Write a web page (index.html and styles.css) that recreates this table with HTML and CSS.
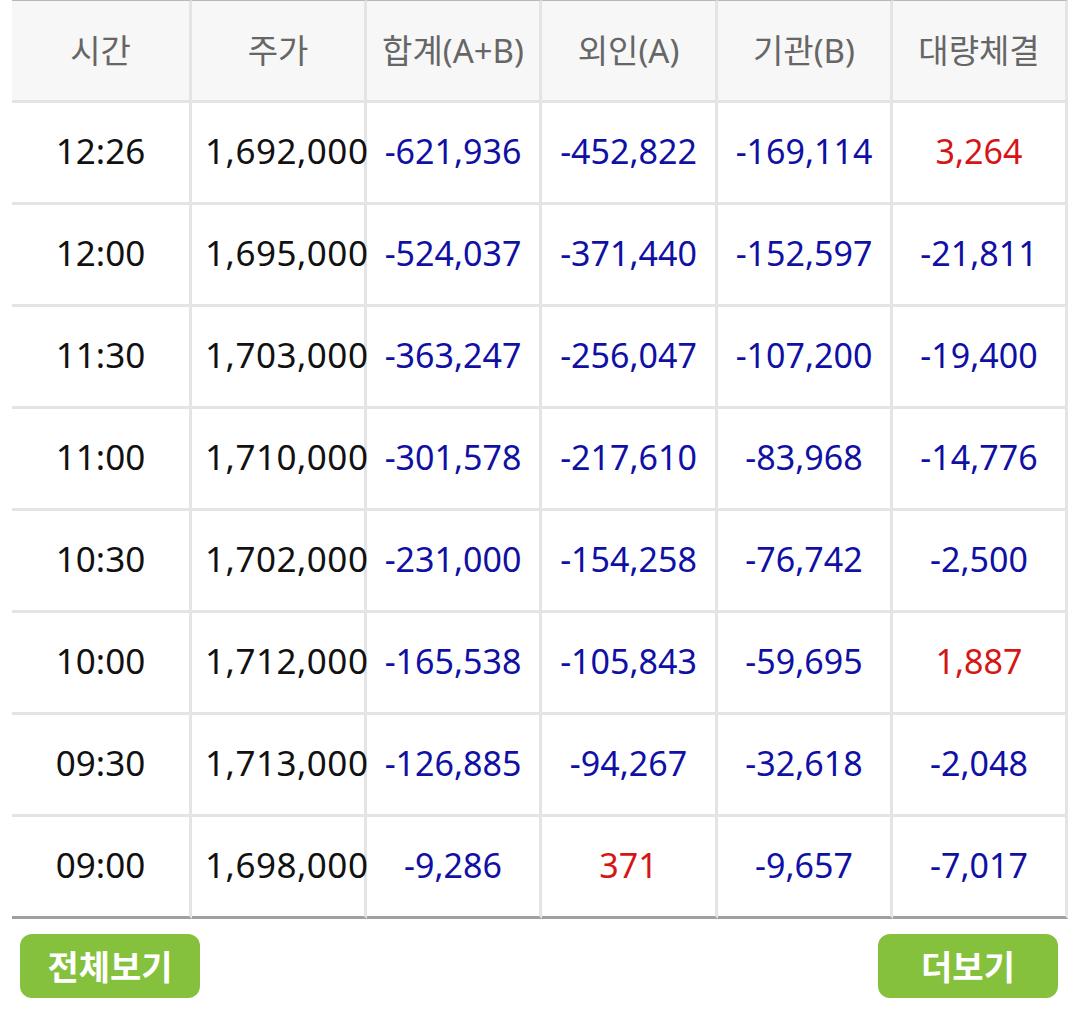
FILE: index.html
```html
<!DOCTYPE html>
<html lang="ko">
<head>
<meta charset="utf-8">
<title>시간대별 투자자 매매</title>
<link rel="stylesheet" href="styles.css">
</head>
<body>
<div class="wrap">
  <table class="trade">
    <thead>
      <tr>
        <th class="c1">시간</th>
        <th class="c2">주가</th>
        <th class="c3">합계(A+B)</th>
        <th class="c4">외인(A)</th>
        <th class="c5">기관(B)</th>
        <th class="c6">대량체결</th>
      </tr>
    </thead>
    <tbody>
      <tr><td>12:26</td><td class="price">1,692,000</td><td class="dn">-621,936</td><td class="dn">-452,822</td><td class="dn">-169,114</td><td class="up">3,264</td></tr>
      <tr><td>12:00</td><td class="price">1,695,000</td><td class="dn">-524,037</td><td class="dn">-371,440</td><td class="dn">-152,597</td><td class="dn">-21,811</td></tr>
      <tr><td>11:30</td><td class="price">1,703,000</td><td class="dn">-363,247</td><td class="dn">-256,047</td><td class="dn">-107,200</td><td class="dn">-19,400</td></tr>
      <tr><td>11:00</td><td class="price">1,710,000</td><td class="dn">-301,578</td><td class="dn">-217,610</td><td class="dn">-83,968</td><td class="dn">-14,776</td></tr>
      <tr><td>10:30</td><td class="price">1,702,000</td><td class="dn">-231,000</td><td class="dn">-154,258</td><td class="dn">-76,742</td><td class="dn">-2,500</td></tr>
      <tr><td>10:00</td><td class="price">1,712,000</td><td class="dn">-165,538</td><td class="dn">-105,843</td><td class="dn">-59,695</td><td class="up">1,887</td></tr>
      <tr><td>09:30</td><td class="price">1,713,000</td><td class="dn">-126,885</td><td class="dn">-94,267</td><td class="dn">-32,618</td><td class="dn">-2,048</td></tr>
      <tr><td>09:00</td><td class="price">1,698,000</td><td class="dn">-9,286</td><td class="up">371</td><td class="dn">-9,657</td><td class="dn">-7,017</td></tr>
    </tbody>
  </table>
  <div class="actions">
    <button class="btn" type="button">전체보기</button>
    <button class="btn" type="button">더보기</button>
  </div>
</div>
</body>
</html>
```

FILE: styles.css
```css
* { box-sizing: border-box; }
html, body {
  margin: 0;
  padding: 0;
  background: #ffffff;
}
body {
  font-family: "Noto Sans", "Noto Sans CJK KR", sans-serif;
  color: #111111;
}
.wrap {
  width: 1080px;
  padding-left: 12px;
}
.trade {
  width: 1056px;
  border-collapse: separate;
  border-spacing: 0;
  table-layout: fixed;
}
.trade th,
.trade td {
  padding: 0;
  text-align: center;
  white-space: nowrap;
  border-right: 3px solid #e4e4e4;
  border-bottom: 3px solid #e4e4e4;
}
.trade th {
  height: 103px;
  padding-bottom: 3px;
  border-top: 1px solid #b8b8b8;
  background: #f7f7f7;
  color: #666666;
  font-weight: 400;
  font-size: 33px;
  font-family: "Noto Sans", "Noto Sans CJK KR", sans-serif;
}
.trade .c1 { width: 180px; }
.trade .c2 { width: 175px; }
.trade .c3 { width: 175px; }
.trade .c4 { width: 176px; }
.trade .c5 { width: 175px; }
.trade .c6 { width: 175px; }
.trade td {
  height: 102px;
  padding-bottom: 4px;
  font-size: 35px;
  color: #111111;
  overflow: visible;
}
.trade td.price {
  text-align: left;
  padding-left: 13px;
  letter-spacing: 0.5px;
}
.trade tbody tr:last-child td {
  border-bottom: 3px solid #a0a0a0;
}
.trade td.dn,
.trade td.up {
  font-size: 34px;
}
.trade td.dn { color: #1010a4; }
.trade td.up { color: #d41616; }
.actions {
  display: flex;
  justify-content: space-between;
  padding: 15px 10px 0 8px;
  width: 1056px;
}
.btn {
  width: 180px;
  height: 64px;
  border: 0;
  border-radius: 12px;
  background: #86c13d;
  color: #ffffff;
  font-family: "Noto Sans CJK KR", "Noto Sans", sans-serif;
  font-weight: 700;
  font-size: 34px;
  padding: 0 0 2px;
  cursor: pointer;
}
```
